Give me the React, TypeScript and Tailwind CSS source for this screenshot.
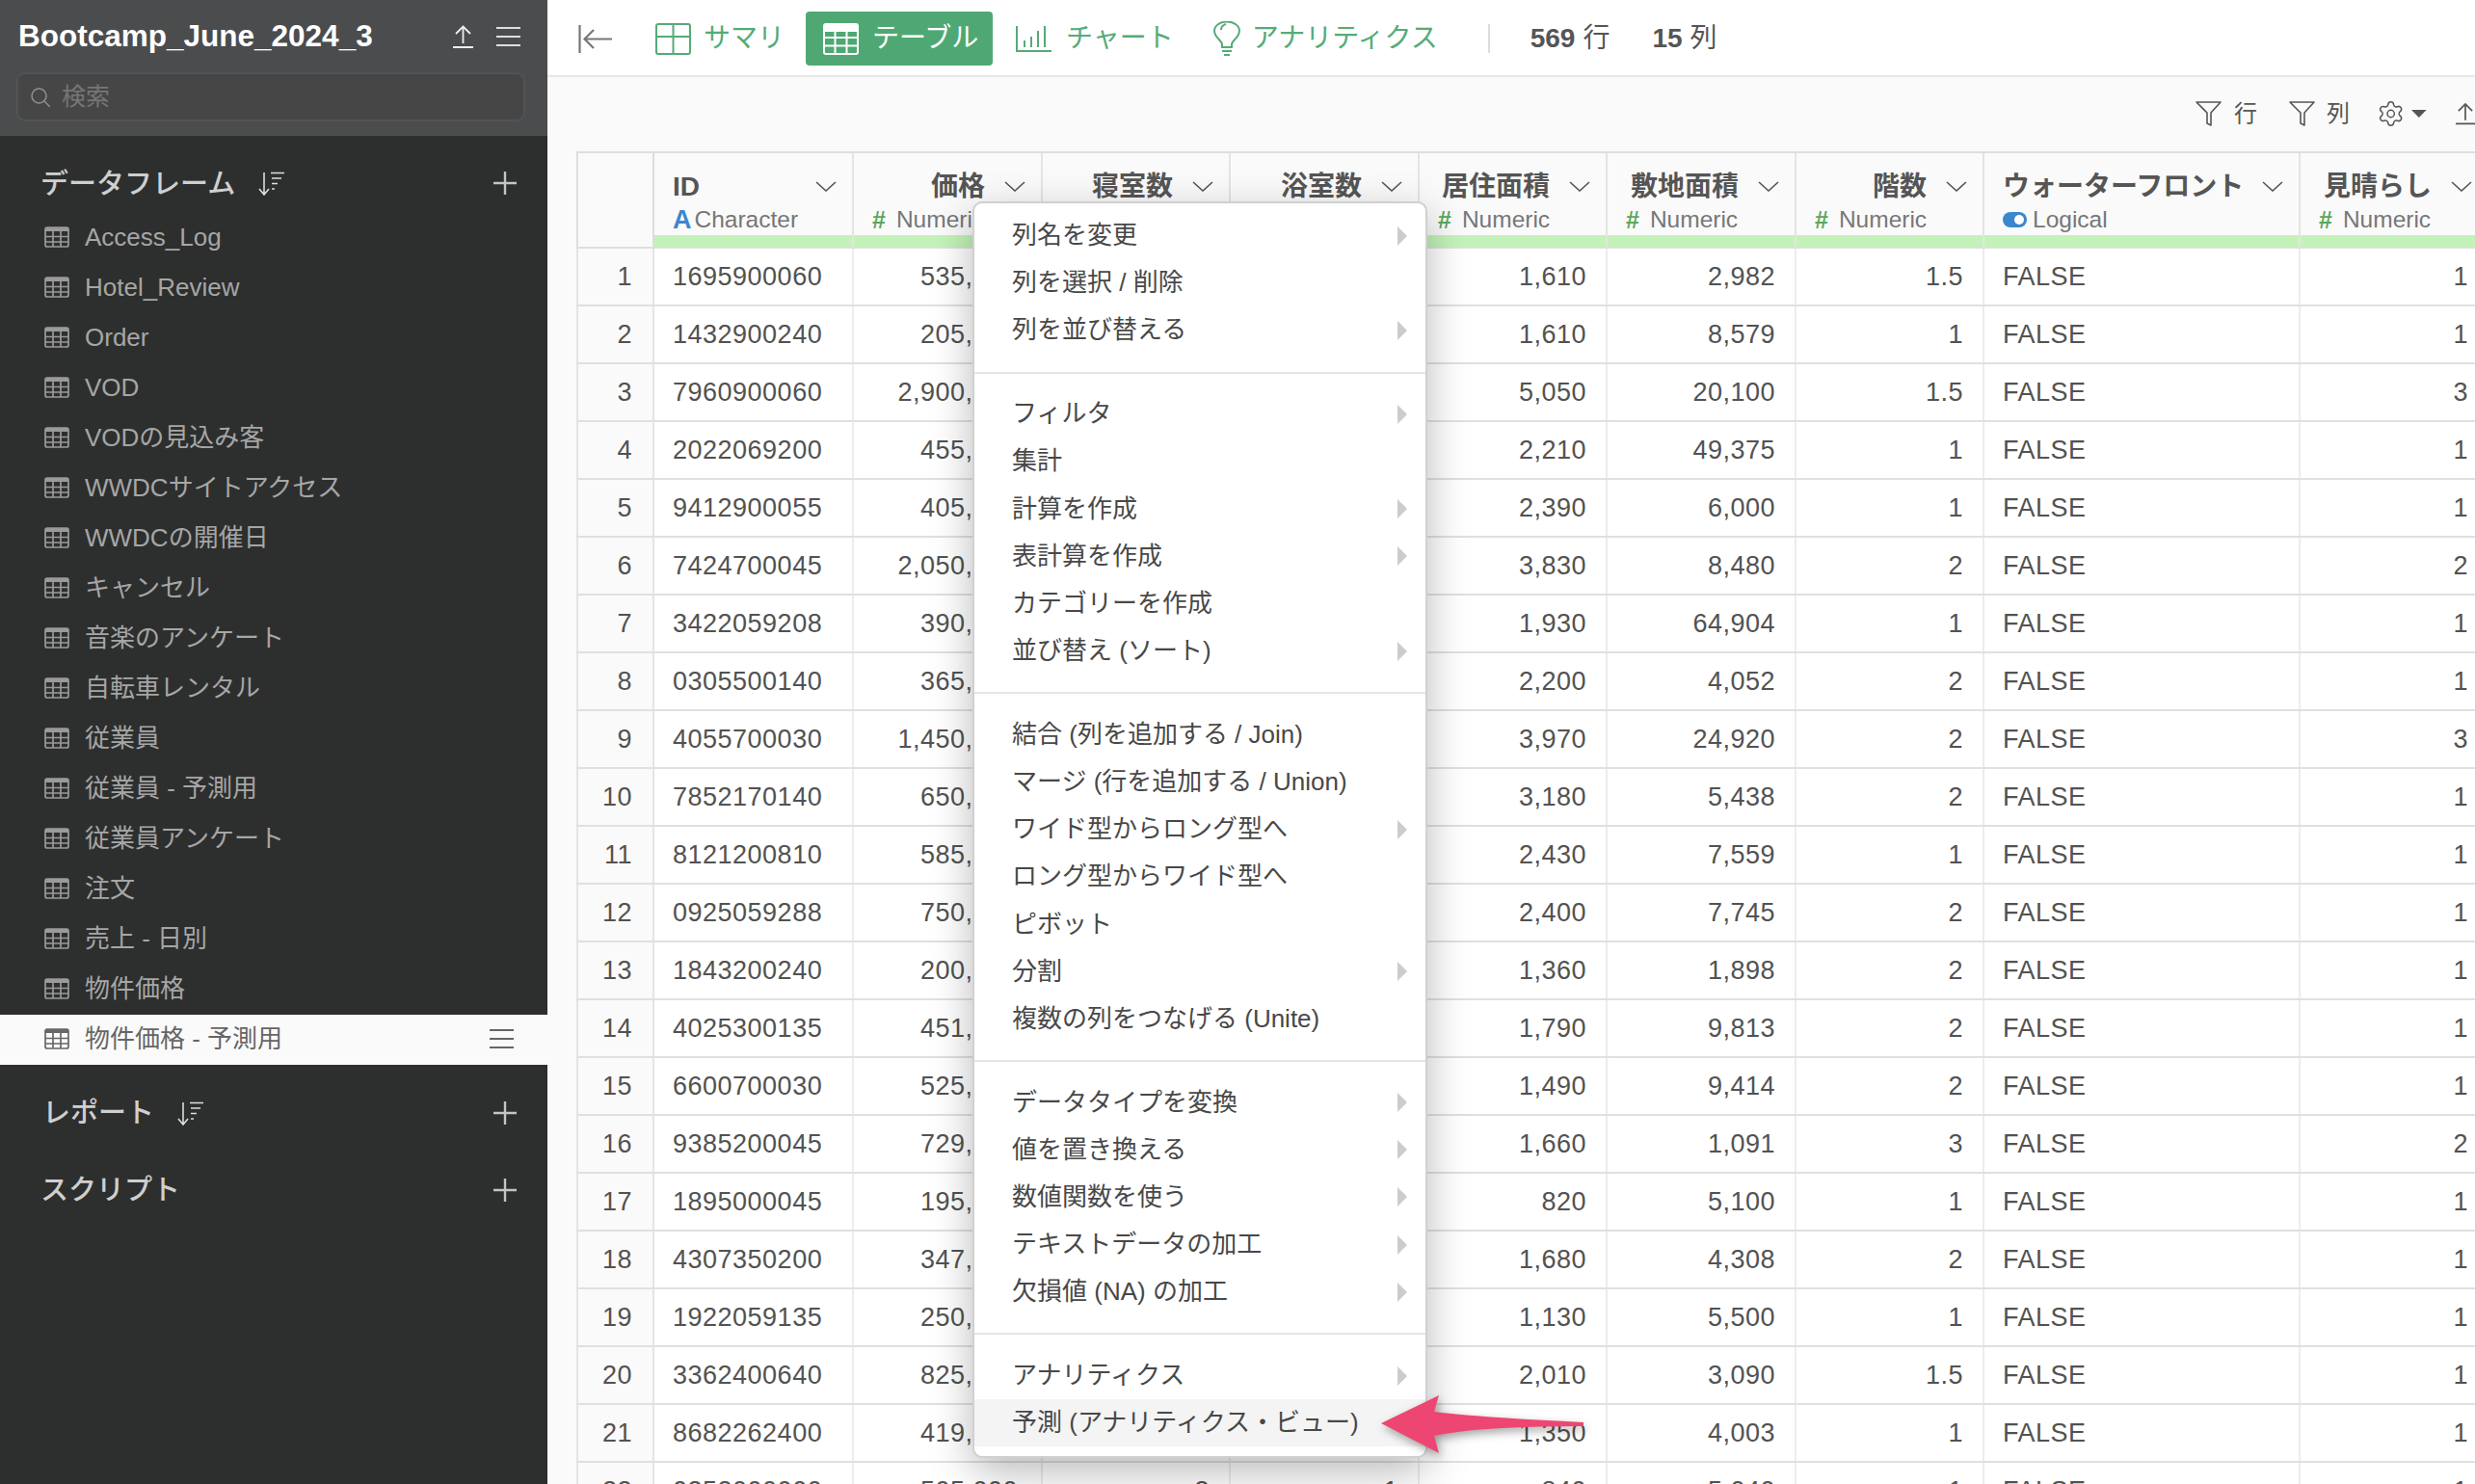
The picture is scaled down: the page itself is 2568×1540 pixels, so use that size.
import React from 'react';
import { Settings } from 'lucide-react';

const FONT = "font-['Liberation_Sans','Noto_Sans_CJK_JP',sans-serif]";

const DATAFRAMES = [
  'Access_Log', 'Hotel_Review', 'Order', 'VOD', 'VODの見込み客', 'WWDCサイトアクセス', 'WWDCの開催日', 'キャンセル',
  '音楽のアンケート', '自転車レンタル', '従業員', '従業員 - 予測用', '従業員アンケート', '注文', '売上 - 日別', '物件価格',
];

interface Column {
  label: string;
  type: 'Character' | 'Numeric' | 'Logical';
  width: string;
  left?: boolean;
  pad?: string;
}

const COLUMNS: Column[] = [
  { label: 'ID', type: 'Character', width: 'w-[207px]', left: true },
  { label: '価格', type: 'Numeric', width: 'w-[196px]', pad: 'pr-[24px]' },
  { label: '寝室数', type: 'Numeric', width: 'w-[195px]' },
  { label: '浴室数', type: 'Numeric', width: 'w-[196px]' },
  { label: '居住面積', type: 'Numeric', width: 'w-[195px]' },
  { label: '敷地面積', type: 'Numeric', width: 'w-[196px]' },
  { label: '階数', type: 'Numeric', width: 'w-[195px]' },
  { label: 'ウォーターフロント', type: 'Logical', width: 'w-[328px]', left: true },
  { label: '見晴らし', type: 'Numeric', width: 'w-[196px]' },
];

const ROWS: string[][] = [
  ['1695900060', '535,000', '3', '1', '1,610', '2,982', '1.5', 'FALSE', '1'],
  ['1432900240', '205,000', '3', '1', '1,610', '8,579', '1', 'FALSE', '1'],
  ['7960900060', '2,900,000', '4', '3.25', '5,050', '20,100', '1.5', 'FALSE', '3'],
  ['2022069200', '455,000', '4', '2.5', '2,210', '49,375', '1', 'FALSE', '1'],
  ['9412900055', '405,000', '3', '1.75', '2,390', '6,000', '1', 'FALSE', '1'],
  ['7424700045', '2,050,000', '5', '3', '3,830', '8,480', '2', 'FALSE', '2'],
  ['3422059208', '390,000', '3', '1.75', '1,930', '64,904', '1', 'FALSE', '1'],
  ['0305500140', '365,000', '3', '2.5', '2,200', '4,052', '2', 'FALSE', '1'],
  ['4055700030', '1,450,000', '3', '3.5', '3,970', '24,920', '2', 'FALSE', '3'],
  ['7852170140', '650,000', '3', '2.5', '3,180', '5,438', '2', 'FALSE', '1'],
  ['8121200810', '585,000', '3', '2.5', '2,430', '7,559', '1', 'FALSE', '1'],
  ['0925059288', '750,000', '3', '2.5', '2,400', '7,745', '2', 'FALSE', '1'],
  ['1843200240', '200,000', '3', '1.75', '1,360', '1,898', '2', 'FALSE', '1'],
  ['4025300135', '451,000', '4', '2', '1,790', '9,813', '2', 'FALSE', '1'],
  ['6600700030', '525,000', '3', '1.5', '1,490', '9,414', '2', 'FALSE', '1'],
  ['9385200045', '729,000', '3', '1.75', '1,660', '1,091', '3', 'FALSE', '2'],
  ['1895000045', '195,000', '2', '1', '820', '5,100', '1', 'FALSE', '1'],
  ['4307350200', '347,000', '3', '2.5', '1,680', '4,308', '2', 'FALSE', '1'],
  ['1922059135', '250,000', '3', '1', '1,130', '5,500', '1', 'FALSE', '1'],
  ['3362400640', '825,000', '3', '2.5', '2,010', '3,090', '1.5', 'FALSE', '1'],
  ['8682262400', '419,000', '2', '2', '1,350', '4,003', '1', 'FALSE', '1'],
  ['0252000000', '505,000', '3', '1', '840', '5,040', '1', 'FALSE', '1'],
];

const MENU_GROUPS: { label: string; sub?: boolean; hover?: boolean }[][] = [
  [{ label: '列名を変更', sub: true }, { label: '列を選択 / 削除' }, { label: '列を並び替える', sub: true }],
  [
    { label: 'フィルタ', sub: true },
    { label: '集計' },
    { label: '計算を作成', sub: true },
    { label: '表計算を作成', sub: true },
    { label: 'カテゴリーを作成' },
    { label: '並び替え (ソート)', sub: true },
  ],
  [
    { label: '結合 (列を追加する / Join)' },
    { label: 'マージ (行を追加する / Union)' },
    { label: 'ワイド型からロング型へ', sub: true },
    { label: 'ロング型からワイド型へ' },
    { label: 'ピボット' },
    { label: '分割', sub: true },
    { label: '複数の列をつなげる (Unite)' },
  ],
  [
    { label: 'データタイプを変換', sub: true },
    { label: '値を置き換える', sub: true },
    { label: '数値関数を使う', sub: true },
    { label: 'テキストデータの加工', sub: true },
    { label: '欠損値 (NA) の加工', sub: true },
  ],
  [{ label: 'アナリティクス', sub: true }, { label: '予測 (アナリティクス・ビュー)', hover: true }],
];

const GridIcon: React.FC<{ className?: string }> = ({ className }) => (
  <svg viewBox="0 0 26 22" className={className} fill="none" stroke="currentColor" strokeWidth="1.7">
    <rect x="1" y="1" width="24" height="20" rx="2" />
    <rect x="1" y="1" width="24" height="4" fill="currentColor" stroke="none" />
    <path d="M1 10.500h24M1 16h24M9 5v16M17 5v16" />
  </svg>
);

const UploadIcon: React.FC<{ className?: string }> = ({ className }) => (
  <svg viewBox="0 0 21 24" className={className} fill="none" stroke="currentColor" strokeWidth="1.8">
    <path d="M10.5 19V1.5M3 9l7.5-7.5L18 9M0 23h21" />
  </svg>
);

const MenuIcon: React.FC<{ className?: string }> = ({ className }) => (
  <svg viewBox="0 0 25 20" className={className} fill="none" stroke="currentColor" strokeWidth="2">
    <path d="M0 1h25M0 10h25M0 19h25" />
  </svg>
);

const PlusIcon = () => (
  <svg viewBox="0 0 24 24" className="w-[24px] h-[24px] text-[#c4c4c4]" fill="none" stroke="currentColor" strokeWidth="2.4">
    <path d="M12 0v24M0 12h24" />
  </svg>
);

const SortIcon = () => (
  <svg viewBox="0 0 28 25" className="w-[28px] h-[25px] text-[#dddddd]" fill="none" stroke="currentColor" strokeWidth="1.6">
    <path d="M6 1v22M1 18l5 6 5-6M13 1.500h14M14 7h10M14 12.500h6M14 18h3" />
  </svg>
);

const FunnelIcon = () => (
  <svg viewBox="0 0 27 26" className="w-[27px] h-[26px] text-[#555555]" fill="none" stroke="currentColor" strokeWidth="1.6">
    <path d="M1 1h25L16 12v13l-4-2V12z" strokeLinejoin="round" />
  </svg>
);

const Chevron = () => (
  <svg viewBox="0 0 22 11" className="w-[22px] h-[11px] shrink-0 text-[#555555]" fill="none" stroke="currentColor" strokeWidth="1.6">
    <path d="M1 1l10 9 10-9" />
  </svg>
);

const TypeLabel: React.FC<{ type: Column['type'] }> = ({ type }) => {
  if (type === 'Character') {
    return (
      <>
        <span className="text-[27px] font-bold text-[#3c86cf] leading-none mr-[3px]">A</span>
        <span>Character</span>
      </>
    );
  }
  if (type === 'Logical') {
    return (
      <>
        <span className="flex items-center justify-end w-[25px] h-[16px] rounded-full bg-[#3c86cf] pr-[3px] mr-[6px]">
          <span className="w-[10px] h-[10px] rounded-full bg-white" />
        </span>
        <span>Logical</span>
      </>
    );
  }
  return (
    <>
      <span className="text-[25px] font-bold text-[#5aa85a] leading-none mr-[11px]">#</span>
      <span>Numeric</span>
    </>
  );
};

const Sidebar = () => (
  <aside className="w-[568px] h-full shrink-0 bg-[#2d2f2e] flex flex-col">
    <div className="h-[141px] bg-[#4b4c4e] pl-[17px] pr-[23px] flex flex-col">
      <div className="h-[75px] flex items-center justify-between pl-[2px] pr-[5px]">
        <span className="text-[31.500px] font-bold text-white leading-none">Bootcamp_June_2024_3</span>
        <div className="flex items-center gap-[24px]">
          <UploadIcon className="w-[21px] h-[24px] text-[#eeeeee]" />
          <MenuIcon className="w-[25px] h-[20px] text-[#dddddd]" />
        </div>
      </div>
      <div className="h-[51px] rounded-[9px] border-2 border-[#525354] bg-[#464646] flex items-center pl-[13px] gap-[12px]">
        <svg viewBox="0 0 20 20" className="w-[20px] h-[20px] text-[#909090]" fill="none" stroke="currentColor" strokeWidth="1.5">
          <circle cx="8.500" cy="8.500" r="7.500" />
          <path d="M14 14l6 6" />
        </svg>
        <span className="text-[25px] text-[#767676]">検索</span>
      </div>
    </div>

    <div className="h-[80px] pt-[18px] pl-[42px] pr-[32px] flex items-center">
      <span className="pt-[3px] text-[29px] font-medium text-[#cfcfcf]">データフレーム</span>
      <span className="ml-[24px]"><SortIcon /></span>
      <span className="ml-auto"><PlusIcon /></span>
    </div>

    {DATAFRAMES.map(name => (
      <div key={name} className="h-[52px] shrink-0 flex items-center pb-[2px] pl-[46px] text-[#a6a6a6]">
        <GridIcon className="w-[26px] h-[22px] text-[#9a9a9a] shrink-0" />
        <span className="ml-[16px] text-[26px]">{name}</span>
      </div>
    ))}

    <div className="h-[52px] shrink-0 flex items-center pb-[2px] pl-[46px] pr-[35px] bg-[#fafafa] text-[#666666]">
      <GridIcon className="w-[26px] h-[22px] shrink-0" />
      <span className="ml-[16px] text-[26px]">物件価格 - 予測用</span>
      <MenuIcon className="w-[25px] h-[20px] ml-auto" />
    </div>

    <div className="h-[100px] shrink-0 pl-[44px] pr-[32px] flex items-center">
      <span className="pt-[2px] text-[29px] font-medium text-[#cfcfcf]">レポート</span>
      <span className="ml-[24px]"><SortIcon /></span>
      <span className="ml-auto"><PlusIcon /></span>
    </div>
    <div className="h-[60px] shrink-0 pl-[42px] pr-[32px] flex items-center">
      <span className="pt-[2px] text-[29px] font-medium text-[#cfcfcf]">スクリプト</span>
      <span className="ml-auto"><PlusIcon /></span>
    </div>
  </aside>
);

const TopBar = () => (
  <div className="h-[80px] shrink-0 bg-white border-b-2 border-[#e8e8e8] flex items-center text-[28px] text-[#55ab78] pt-[2px]">
    <svg viewBox="0 0 35 29" className="ml-[32px] w-[35px] h-[29px] text-[#777777]" fill="none" stroke="currentColor" strokeWidth="2.2">
      <path d="M1.500 0v29M35 14.500H7M16 5l-9.500 9.500L16 24" />
    </svg>

    <svg viewBox="0 0 37 33" className="ml-[45px] w-[37px] h-[33px]" fill="none" stroke="currentColor" strokeWidth="2">
      <rect x="1" y="1" width="35" height="31" rx="2" />
      <path d="M18.500 1v31M1 14h35" />
    </svg>
    <span className="ml-[13px]">サマリ</span>

    <div className="ml-[22px] w-[194px] h-[56px] rounded-[4px] bg-[#4fa873] text-white flex items-center pl-[18px]">
      <svg viewBox="0 0 37 33" className="w-[37px] h-[33px]" fill="none" stroke="currentColor" strokeWidth="2">
        <rect x="1" y="1" width="35" height="31" rx="2" />
        <rect x="1" y="1" width="35" height="8" fill="currentColor" stroke="none" />
        <path d="M1 15h35M1 23.500h35M12.500 8v24M24.500 8v24" />
      </svg>
      <span className="ml-[14px]">テーブル</span>
    </div>

    <svg viewBox="0 0 37 27" className="ml-[24px] w-[37px] h-[27px]" fill="none" stroke="currentColor" strokeWidth="2">
      <path d="M1 0v26h36M9 15v7M16 11v11M23 5v17M30 0v22" />
    </svg>
    <span className="ml-[15px]">チャート</span>

    <svg viewBox="0 0 28 36" className="ml-[41px] w-[28px] h-[36px]" fill="none" stroke="currentColor" strokeWidth="2">
      <path d="M9 27v-3c0-4-8-7-8-14a13 9.500 0 0 1 26 0c0 7-8 10-8 14v3z" />
      <path d="M8 9c0-3 2-5 5-6M9 31h10M11 35h6" />
    </svg>
    <span className="ml-[12px]">アナリティクス</span>

    <span className="ml-[52px] w-[2px] h-[30px] bg-[#dddddd]" />
    <span className="ml-[42px] text-[#555555] font-bold">569</span>
    <span className="ml-[8px] text-[#555555]">行</span>
    <span className="ml-[44px] text-[#555555] font-bold">15</span>
    <span className="ml-[8px] text-[#555555]">列</span>
  </div>
);

const FilterBar = () => (
  <div className="h-[77px] shrink-0 flex items-center pb-[2px] text-[24px] text-[#555555]">
    <div className="ml-[1710px]"><FunnelIcon /></div>
    <span className="ml-[13px]">行</span>
    <div className="ml-[33px]"><FunnelIcon /></div>
    <span className="ml-[12px]">列</span>
    <Settings className="ml-[28px] w-[30px] h-[30px]" strokeWidth={1.2} />
    <svg viewBox="0 0 16 8" className="ml-[7px] w-[16px] h-[8px]" fill="currentColor"><path d="M0 0h16L8 8z" /></svg>
    <UploadIcon className="ml-[30px] w-[20px] h-[24px] shrink-0" />
  </div>
);

const DataTable = () => (
  <div className="ml-[30px] flex flex-col text-[27px] tracking-[0.5px] text-[#525252] leading-none">
    <div className="flex h-[101px] shrink-0 border-y-2 border-[#dedede]">
      <div className="w-[81px] shrink-0 border-x-2 border-[#dedede]" />
      {COLUMNS.map(col => (
        <div key={col.label} className={`${col.width} shrink-0 border-r-2 border-[#e4e4e4] flex flex-col tracking-normal`}>
          <div className={`h-[62px] pt-[7px] flex items-center pr-[16px] ${col.left ? 'justify-between pl-[19px]' : 'justify-end gap-[20px]'}`}>
            <span className="text-[28px] font-bold text-[#555555]">{col.label}</span>
            <Chevron />
          </div>
          <div className="h-[14px] pl-[19px] flex items-center text-[24.500px] text-[#777777] whitespace-nowrap">
            <TypeLabel type={col.type} />
          </div>
          <div className="mt-auto h-[12px] bg-[#c3f3b8]" />
        </div>
      ))}
    </div>
    {ROWS.map((row, i) => (
      <div key={row[0]} className="flex h-[60px] shrink-0 border-b-2 border-[#e0e0e0]">
        <div className="w-[81px] shrink-0 border-x-2 border-[#e4e4e4] bg-[#fafafa] flex items-center justify-end pr-[21px]">{i + 1}</div>
        {COLUMNS.map((col, c) => (
          <div
            key={col.label}
            className={`${col.width} shrink-0 bg-white border-r-2 border-[#ececec] flex items-center ${col.left ? 'pl-[19px]' : `justify-end ${col.pad ?? 'pr-[20px]'}`}`}
          >
            {row[c]}
          </div>
        ))}
      </div>
    ))}
  </div>
);

const ContextMenu = () => (
  <div className="absolute left-[1009px] top-[209px] w-[472px] h-[1304px] rounded-[10px] border-2 border-[#d0d0d0] bg-white shadow-[0_14px_44px_rgba(0,0,0,0.28)] py-[9px] text-[26px] text-[#484848]">
    {MENU_GROUPS.map((group, g) => (
      <div key={g}>
        {g > 0 && <div className="mt-[18px] mb-[17.500px] h-[2px] bg-[#e6e6e6]" />}
        {group.map(item => (
          <div key={item.label} className={`h-[49.200px] flex items-center pl-[39px] pr-[19px] ${item.hover ? 'bg-[#f4f4f4]' : ''}`}>
            <span>{item.label}</span>
            {item.sub && (
              <svg viewBox="0 0 10 20" className="ml-auto w-[10px] h-[20px] text-[#cccccc]" fill="currentColor">
                <path d="M0 0l10 10L0 20z" />
              </svg>
            )}
          </div>
        ))}
      </div>
    ))}
  </div>
);

// annotation arrow pasted over the screenshot, points at the last menu item
const PinkArrow = () => (
  <svg viewBox="0 0 240 90" className="absolute left-[1423px] top-[1438px] w-[240px] h-[90px] drop-shadow-[2px_4px_5px_rgba(0,0,0,0.35)]">
    <path d="M10 39L70 10L65 27Q110 33 220 38V42Q110 42 65 52L70 70Z" fill="#ee4672" />
  </svg>
);

export default function App() {
  return (
    <div className={`relative w-[2568px] h-[1540px] overflow-hidden flex bg-[#fafafa] ${FONT}`}>
      <Sidebar />
      <main className="flex-1 min-w-0 h-full flex flex-col overflow-hidden">
        <TopBar />
        <FilterBar />
        <DataTable />
      </main>
      <ContextMenu />
      <PinkArrow />
    </div>
  );
}
